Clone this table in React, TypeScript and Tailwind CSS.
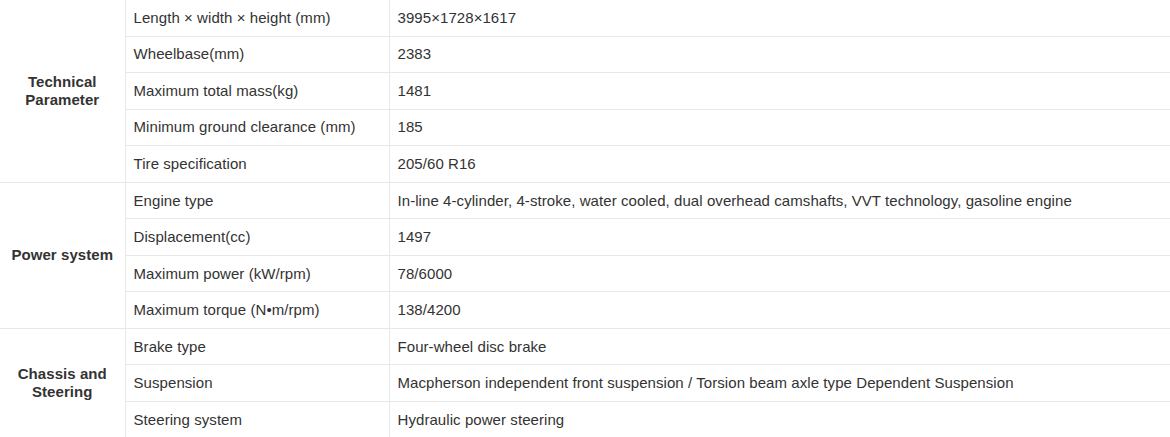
import React from 'react';

type Group = { title: string[]; rows: [string, string][] };

const groups: Group[] = [
  {
    title: ['Technical', 'Parameter'],
    rows: [
      ['Length × width × height (mm)', '3995×1728×1617'],
      ['Wheelbase(mm)', '2383'],
      ['Maximum total mass(kg)', '1481'],
      ['Minimum ground clearance (mm)', '185'],
      ['Tire specification', '205/60 R16'],
    ],
  },
  {
    title: ['Power system'],
    rows: [
      ['Engine type', 'In-line 4-cylinder, 4-stroke, water cooled, dual overhead camshafts, VVT technology, gasoline engine'],
      ['Displacement(cc)', '1497'],
      ['Maximum power (kW/rpm)', '78/6000'],
      ['Maximum torque (N•m/rpm)', '138/4200'],
    ],
  },
  {
    title: ['Chassis and', 'Steering'],
    rows: [
      ['Brake type', 'Four-wheel disc brake'],
      ['Suspension', 'Macpherson independent front suspension / Torsion beam axle type Dependent Suspension'],
      ['Steering system', 'Hydraulic power steering'],
    ],
  },
];

export default function App() {
  return (
    <div className="w-[1170px] h-[437px] overflow-hidden bg-white font-['Liberation_Sans',Arial,sans-serif] text-[15px] tracking-[0.07px] text-[#333]">
      <table className="w-full border-collapse -mt-px">
        <colgroup>
          <col className="w-[125px]" />
          <col className="w-[264px]" />
          <col />
        </colgroup>
        <tbody>
          {groups.map((g) =>
            g.rows.map((r, i) => (
              <tr key={g.title.join() + i} className="h-[36.55px]">
                {i === 0 && (
                  <td
                    rowSpan={g.rows.length}
                    className="border border-l-0 border-[#e8e8e8] text-center align-middle font-bold leading-[18px] px-2"
                  >
                    {g.title.map((t) => (
                      <div key={t}>{t}</div>
                    ))}
                  </td>
                )}
                <td className="border border-[#e8e8e8] pl-[8px] pr-2 align-middle leading-[18px]">{r[0]}</td>
                <td className="border border-r-0 border-[#e8e8e8] pl-[8px] pr-2 align-middle leading-[18px]">{r[1]}</td>
              </tr>
            ))
          )}
        </tbody>
      </table>
    </div>
  );
}
